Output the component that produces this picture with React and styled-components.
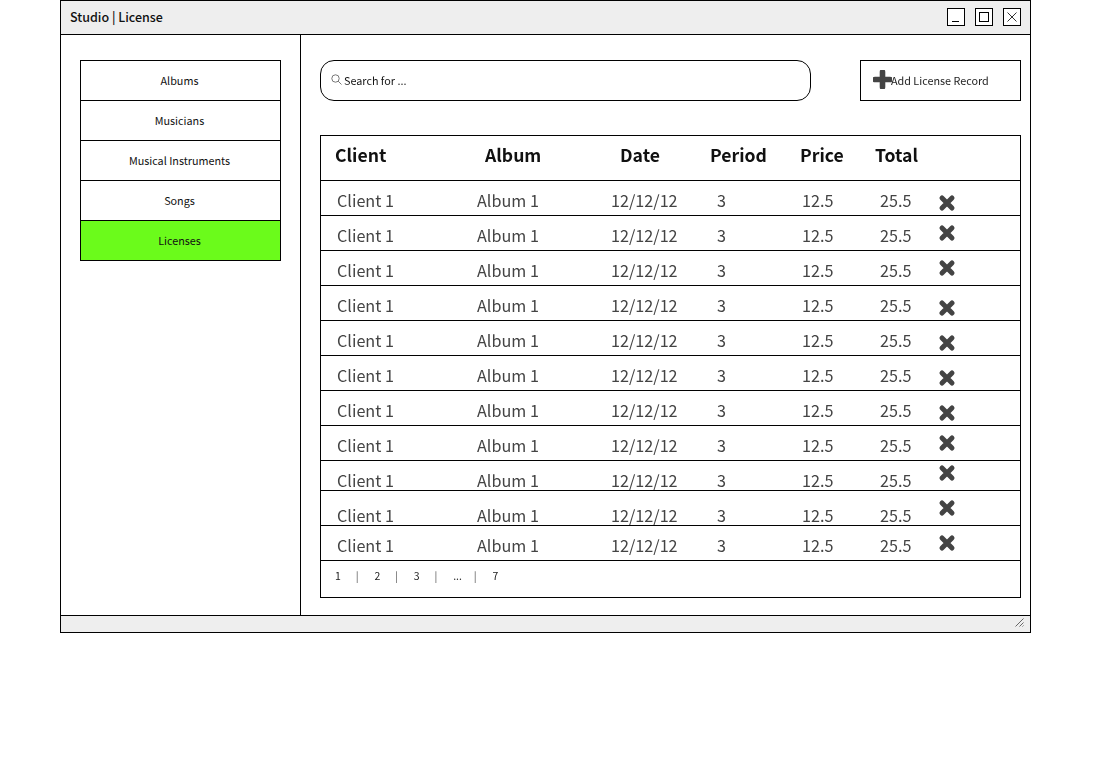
import React from "react";
import styled, { createGlobalStyle } from "styled-components";

const Global = createGlobalStyle`
  body {
    margin: 0;
    background: #fff;
    font-family: "Noto Sans CJK SC", "Noto Sans", sans-serif;
    color: #111;
  }
`;

const Page = styled.div`
  padding-left: 60px;
  opacity: 0.999;
`;

const Window = styled.div`
  width: 971px;
  height: 633px;
  box-sizing: border-box;
  border: 1px solid #000;
  display: flex;
  flex-direction: column;
`;

const TitleBar = styled.div`
  height: 34px;
  flex-shrink: 0;
  box-sizing: border-box;
  background: #eee;
  border-bottom: 1px solid #000;
  display: flex;
  align-items: center;
  justify-content: space-between;
  padding: 0 9px 1px 9px;
`;

const Title = styled.div`
  font-size: 12.5px;
  font-weight: 500;
  margin-bottom: 2px;
`;

const WinButtons = styled.div`
  display: flex;
  gap: 10px;
`;

const WinButton = styled.div`
  width: 18px;
  height: 18px;
  box-sizing: border-box;
  border: 1px solid #000;
  background: #fff;
  svg {
    display: block;
  }
`;

const Body = styled.div`
  flex: 1;
  display: flex;
  min-height: 0;
`;

const Sidebar = styled.div`
  width: 240px;
  box-sizing: border-box;
  border-right: 1px solid #000;
  padding: 25px 19px 0;
`;

const Menu = styled.div`
  border: 1px solid #000;
  width: 201px;
  box-sizing: border-box;
`;

const MenuItem = styled.div`
  height: 40px;
  box-sizing: border-box;
  display: flex;
  align-items: center;
  justify-content: center;
  padding: 0 2px 2px 0;
  font-size: 10.8px;
  background: ${(p) => (p.$active ? "#6bfb1b" : "#fff")};
  border-bottom: 1px solid #000;
  &:last-child {
    height: 39px;
    border-bottom: 0;
  }
`;

const Main = styled.div`
  flex: 1;
  padding: 25px 9px 0 19px;
`;

const TopRow = styled.div`
  display: flex;
  justify-content: space-between;
  height: 41px;
`;

const SearchBox = styled.div`
  width: 491px;
  box-sizing: border-box;
  border: 1px solid #000;
  border-radius: 14px;
  display: flex;
  align-items: center;
  padding: 0 0 2px 10px;
  gap: 2px;
  font-size: 10.8px;
`;

const AddButton = styled.div`
  width: 161px;
  box-sizing: border-box;
  border: 1px solid #000;
  display: flex;
  align-items: center;
  padding: 0 0 2px 12px;
  font-size: 10.8px;
  color: #222;
  svg {
    margin-right: -1px;
  }
`;

const Table = styled.div`
  margin-top: 34px;
  width: 701px;
  height: 463px;
  box-sizing: border-box;
  border: 1px solid #000;
`;

const HeadRow = styled.div`
  height: 45px;
  box-sizing: border-box;
  border-bottom: 1px solid #000;
  display: grid;
  grid-template-columns: 150px 135px 90px 90px 75px 1fr;
  padding: 5px 0 0 14px;
  font-size: 17.6px;
  font-weight: 700;
  line-height: 28px;
`;

const Row = styled.div`
  height: ${(p) => p.$h}px;
  box-sizing: border-box;
  border-bottom: 1px solid #000;
  display: grid;
  grid-template-columns: 140px 134px 106px 85px 78px 58px 1fr;
  padding-left: 16px;
  font-size: 16.2px;
  line-height: 24px;
  color: #444;
`;

const Cell = styled.div`
  padding-top: ${(p) => p.$top}px;
  white-space: nowrap;
`;

const RemoveCell = styled.div`
  padding-top: ${(p) => p.$top}px;
  svg {
    display: block;
  }
`;

const Pager = styled.div`
  display: flex;
  padding: 7px 0 0 14px;
  font-size: 10.5px;
  line-height: 16px;
  color: #222;
`;

const PageItem = styled.span`
  width: 19.7px;
  box-sizing: border-box;
  padding-left: ${(p) => (p.$sep ? "1px" : "0")};
  color: ${(p) => (p.$sep ? "#555" : "inherit")};
`;

const StatusBar = styled.div`
  height: 17px;
  flex-shrink: 0;
  box-sizing: border-box;
  background: #eee;
  border-top: 1px solid #000;
  display: flex;
  justify-content: flex-end;
  align-items: flex-end;
  padding: 0 6px 5px 0;
`;

const menu = ["Albums", "Musicians", "Musical Instruments", "Songs", "Licenses"];

// row height, text offset and icon offset are uneven in the mockup
const rows = [
  [35, 7, 13],
  [35, 7, 8],
  [35, 7, 8],
  [35, 7, 13],
  [35, 7, 13],
  [35, 7, 13],
  [35, 7, 13],
  [35, 7, 8],
  [30, 7, 3],
  [35, 12, 8],
  [35, 7, 8],
];

const pages = ["1", "|", "2", "|", "3", "|", "...", "|", "7"];

const RemoveIcon = () => (
  <svg width="18" height="18" viewBox="0 0 18 18">
    <path d="M4 4l10 10M14 4L4 14" stroke="#444" strokeWidth="5" strokeLinecap="round" fill="none" />
  </svg>
);

const PlusIcon = () => (
  <svg width="19" height="19" viewBox="0 0 19 19">
    <path d="M9.5 2v15M2 9.5h15" stroke="#444" strokeWidth="5.6" strokeLinecap="round" fill="none" />
  </svg>
);

export default function App() {
  return (
    <Page>
      <Global />
      <Window>
        <TitleBar>
          <Title>Studio | License</Title>
          <WinButtons>
            <WinButton>
              <svg width="16" height="16" viewBox="0 0 16 16">
                <path d="M4 12.5h7" stroke="#000" fill="none" />
              </svg>
            </WinButton>
            <WinButton>
              <svg width="16" height="16" viewBox="0 0 16 16">
                <rect x="3.5" y="3.5" width="9" height="9" stroke="#000" fill="none" />
              </svg>
            </WinButton>
            <WinButton>
              <svg width="16" height="16" viewBox="0 0 16 16">
                <path d="M3.5 3.5l9 9M12.5 3.5l-9 9" stroke="#000" strokeWidth="0.8" fill="none" />
              </svg>
            </WinButton>
          </WinButtons>
        </TitleBar>
        <Body>
          <Sidebar>
            <Menu>
              {menu.map((m) => (
                <MenuItem key={m} $active={m === "Licenses"}>{m}</MenuItem>
              ))}
            </Menu>
          </Sidebar>
          <Main>
            <TopRow>
              <SearchBox>
                <svg width="11" height="11" viewBox="0 0 11 11">
                  <circle cx="4.5" cy="4.5" r="3.7" stroke="#555" strokeWidth="0.8" fill="none" />
                  <path d="M7.2 7.2l3.3 3.3" stroke="#555" strokeWidth="0.8" />
                </svg>
                Search for ...
              </SearchBox>
              <AddButton>
                <PlusIcon />
                Add License Record
              </AddButton>
            </TopRow>
            <Table>
              <HeadRow>
                <div>Client</div>
                <div>Album</div>
                <div>Date</div>
                <div>Period</div>
                <div>Price</div>
                <div>Total</div>
              </HeadRow>
              {rows.map(([h, top, iconTop], i) => (
                <Row key={i} $h={h}>
                  <Cell $top={top}>Client 1</Cell>
                  <Cell $top={top}>Album 1</Cell>
                  <Cell $top={top}>12/12/12</Cell>
                  <Cell $top={top}>3</Cell>
                  <Cell $top={top}>12.5</Cell>
                  <Cell $top={top}>25.5</Cell>
                  <RemoveCell $top={iconTop}>
                    <RemoveIcon />
                  </RemoveCell>
                </Row>
              ))}
              <Pager>
                {pages.map((p, i) => (
                  <PageItem key={i} $sep={p === "|"}>{p}</PageItem>
                ))}
              </Pager>
            </Table>
          </Main>
        </Body>
        <StatusBar>
          <svg width="9" height="9" viewBox="0 0 9 9">
            <path d="M0.5 8.5l8-8M4.5 8.5l4-4M7.5 8.5l1-1" stroke="#444" strokeWidth="0.8" fill="none" />
          </svg>
        </StatusBar>
      </Window>
    </Page>
  );
}
